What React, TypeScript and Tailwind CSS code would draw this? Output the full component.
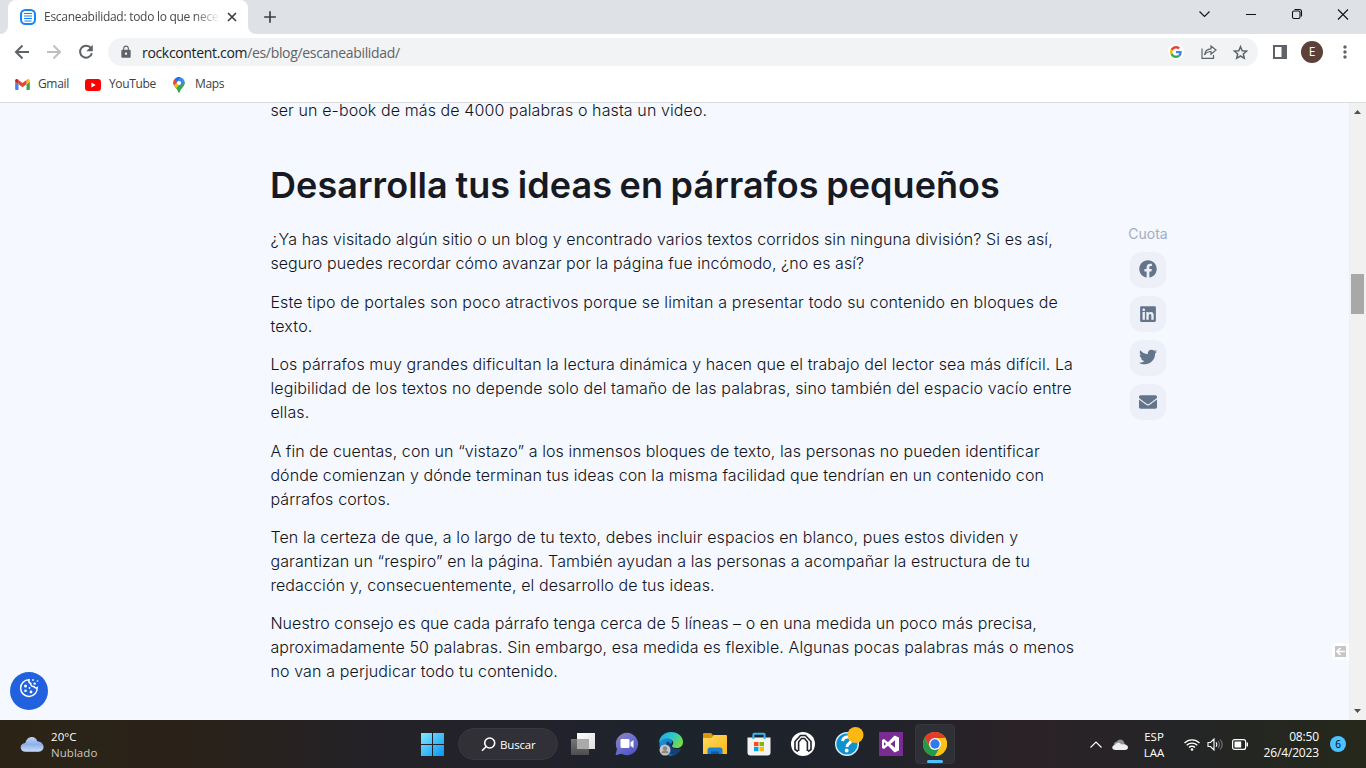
import type { ReactNode } from "react";
import { FaFacebook, FaLinkedin, FaTwitter, FaEnvelope } from "react-icons/fa";
import { MdLock, MdMoreVert, MdAdd } from "react-icons/md";

const ui = "font-['Open_Sans','Noto_Sans',sans-serif] whitespace-nowrap";

function GoogleG() {
  return (
    <svg width="12" height="12" viewBox="0 0 48 48">
      <path fill="#EA4335" d="M24 9.5c3.54 0 6.71 1.22 9.21 3.6l6.85-6.85C35.9 2.38 30.47 0 24 0 14.62 0 6.51 5.38 2.56 13.22l7.98 6.19C12.43 13.72 17.74 9.5 24 9.5z" />
      <path fill="#4285F4" d="M46.98 24.55c0-1.57-.15-3.09-.38-4.55H24v9.02h12.94c-.58 2.96-2.26 5.48-4.78 7.18l7.73 6c4.51-4.18 7.09-10.36 7.09-17.65z" />
      <path fill="#FBBC05" d="M10.53 28.59c-.48-1.45-.76-2.99-.76-4.59s.27-3.14.76-4.59l-7.98-6.19C.92 16.46 0 20.12 0 24s.92 7.54 2.56 10.78l7.97-6.19z" />
      <path fill="#34A853" d="M24 48c6.48 0 11.93-2.13 15.89-5.81l-7.73-6c-2.15 1.45-4.92 2.3-8.16 2.3-6.26 0-11.57-4.22-13.47-9.91l-7.98 6.19C6.51 42.62 14.62 48 24 48z" />
    </svg>
  );
}

function GmailIcon() {
  return (
    <svg width="15" height="11" viewBox="52 42 88 66">
      <path fill="#4285f4" d="M58 108h14V74L52 59v43c0 3.32 2.69 6 6 6" />
      <path fill="#34a853" d="M120 108h14c3.32 0 6-2.69 6-6V59l-20 15" />
      <path fill="#fbbc04" d="M120 48v26l20-15v-8c0-7.42-8.47-11.65-14.4-7.2" />
      <path fill="#ea4335" d="M72 74V48l24 18 24-18v26L96 92" />
      <path fill="#c5221f" d="M52 51v8l20 15V48l-5.6-4.2c-5.94-4.45-14.4-.22-14.4 7.2" />
    </svg>
  );
}

function MapsIcon() {
  return (
    <svg width="12" height="16" viewBox="0 0 12 16">
      <path fill="#34a853" d="M.8 8.4C1.900 10.500 4.800 12 5.200 15.100c.2 1.100 1.400 1.100 1.600 0 .5-3.100 3.400-4.700 4.500-7.200.6-1.300.7-2.500.4-3.700z" />
      <path fill="#fbbc04" d="M.9 8.600c.6 1.100 1.400 2 2.200 2.900L8 5.700 4.200 4.600z" />
      <path fill="#ea4335" d="M1.500 2.100A5.900 5.900 0 0 0 .9 8.600L4.700 4.700z" />
      <path fill="#1a73e8" d="M1.500 2.100A6 6 0 0 1 7.700.2L4.500 5z" />
      <path fill="#4285f4" d="M7.700.2a6 6 0 0 1 3.900 4L7.500 8.200 5 4z" />
      <circle cx="6" cy="6" r="2.100" fill="#fff" />
    </svg>
  );
}

function Bookmark({ icon, label, className }: { icon: ReactNode; label: string; className: string }) {
  return (
    <div className={`flex items-center ${className}`}>
      {icon}
      <span className="-mt-px">{label}</span>
    </div>
  );
}

function TabStrip() {
  return (
    <div className="flex h-[34px] items-stretch bg-[#dee1e6] pl-2">
      <div className="relative flex w-[240px] items-center rounded-t-lg bg-white pl-3">
        <svg className="absolute -left-2 bottom-0" width="8" height="8"><path fill="#fff" d="M8 0v8H0a8 8 0 0 0 8-8z" /></svg>
        <svg className="absolute -right-2 bottom-0" width="8" height="8"><path fill="#fff" d="M0 0v8h8a8 8 0 0 1-8-8z" /></svg>
        <svg width="16" height="16" viewBox="0 0 16 16" fill="none" stroke="#1583fb">
          <rect x="1" y="1" width="14" height="14" rx="4.500" strokeWidth="2" />
          <path strokeWidth="1.200" d="M4 4.500h8M4 7h8M4 9.500h8M4.500 12h7" />
        </svg>
        <div className={`${ui} ml-2 w-[175px] text-[12px] tracking-[-0.28px] text-[#45484b] [mask-image:linear-gradient(to_right,#000_150px,transparent_176px)]`}>
          Escaneabilidad: todo lo que nece
        </div>
        <svg className="ml-[8px]" width="10" height="10" fill="none" stroke="#3c4043" strokeWidth="1.700"><path d="M1 1l8 8M9 1L1 9" /></svg>
      </div>
      <MdAdd className="mt-[7px] ml-[12px] text-[#3c4043]" size={20} />
      <svg className="mt-[8px] mr-[7px] ml-auto" width="160" height="14" viewBox="0 0 160 14" fill="none" stroke="#111" strokeWidth="1.100">
        <path d="M.5 3.500l5 5 5-5M47 6.500h10" />
        <rect x="93.500" y="3" width="7.500" height="7.500" rx="1.500" />
        <path d="M95.500 1.500h5a2 2 0 0 1 2 2v5M139 1.500l10 10M149 1.500l-10 10" />
      </svg>
    </div>
  );
}

function Toolbar() {
  return (
    <div className="flex h-9 items-center pr-[11px] pl-3">
      <svg width="20" height="20" fill="none" stroke="#5f6368" strokeWidth="2"><path d="M17 10H4.500M10.500 3.500L4 10l6.500 6.500" /></svg>
      <svg className="ml-3" width="20" height="20" fill="none" stroke="#bdbfc1" strokeWidth="2"><path d="M3 10h12.500M9.500 3.500L16 10l-6.500 6.500" /></svg>
      <svg className="ml-3" width="20" height="20"><path fill="none" stroke="#5f6368" strokeWidth="2" d="M15 6.200A6 6 0 1 0 15.900 11.200" /><path fill="#5f6368" d="M16.800 2.700v6.500h-6.500z" /></svg>
      <div className="ml-3 flex h-7 flex-1 items-center rounded-full bg-[#f1f3f4] pr-[9px] pl-[11px]">
        <MdLock size={14} className="text-[#5f6368]" />
        <div className={`${ui} ml-[9px] text-[14px] tracking-[-0.33px] text-[#5f6368]`}>
          <span className="text-[#202124]">rockcontent.com</span>/es/blog/escaneabilidad/
        </div>
        <div className="ml-auto flex size-4 items-center justify-center rounded-full bg-white"><GoogleG /></div>
        <svg className="ml-[17px]" width="16" height="16" viewBox="0 0 16 16" fill="none" stroke="#5f6368" strokeWidth="1.200">
          <path d="M1 4.500v9.800h11.500V11M3.500 11C4 7 6 5 10 4.800V2l5 4-5 4.200V7.500C7 7.500 5.200 8.500 3.500 11z" />
        </svg>
        <svg className="ml-[15px]" width="17" height="17" viewBox="0 0 17 17" fill="none" stroke="#5f6368" strokeWidth="1.500">
          <path d="M8.500 2.700l1.700 4 4.400.4-3.300 2.900 1 4.300-3.800-2.300-3.800 2.300 1-4.300-3.300-2.900 4.400-.4z" />
        </svg>
      </div>
      <svg className="ml-[15px]" width="14" height="14" viewBox="0 0 14 14">
        <path fill="#5f6368" fillRule="evenodd" d="M0 0h14v14H0zM2 2v10h6.500V2z" />
      </svg>
      <div className={`${ui} ml-[14px] flex size-[22px] items-center justify-center rounded-full bg-[#5d4037] text-[12px] text-white`}>E</div>
      <MdMoreVert className="ml-[12px] text-[#5f6368]" size={20} />
    </div>
  );
}

function Bookmarks() {
  return (
    <div className={`${ui} flex h-[33px] items-center border-b border-[#d9dce1] pb-[3px] pl-[15px] text-[12px] tracking-[-0.35px] text-[#3c4043]`}>
      <Bookmark className="w-[70px] gap-2" icon={<GmailIcon />} label="Gmail" />
      <Bookmark
        className="w-[88px] gap-2"
        icon={
          <svg width="16" height="12" viewBox="0 0 16 12">
            <rect width="16" height="12" rx="3" fill="#f00" />
            <path fill="#fff" d="M6.400 3.500v5l4.300-2.500z" />
          </svg>
        }
        label="YouTube"
      />
      <Bookmark className="gap-[10px]" icon={<MapsIcon />} label="Maps" />
    </div>
  );
}

const paragraphs = [
  [
    { text: "¿Ya has visitado algún sitio o un blog y encontrado varios textos corridos sin ninguna división? Si es así,", track: "tracking-[0.11px]" },
    { text: "seguro puedes recordar cómo avanzar por la página fue incómodo, ¿no es así?", track: "tracking-[0.075px]" },
  ],
  [
    { text: "Este tipo de portales son poco atractivos porque se limitan a presentar todo su contenido en bloques de", track: "tracking-[0.155px]" },
    { text: "texto.", track: "tracking-[0.2px]" },
  ],
  [
    { text: "Los párrafos muy grandes dificultan la lectura dinámica y hacen que el trabajo del lector sea más difícil. La", track: "tracking-[0.1px]" },
    { text: "legibilidad de los textos no depende solo del tamaño de las palabras, sino también del espacio vacío entre", track: "tracking-[0.125px]" },
    { text: "ellas.", track: "tracking-[0.1px]" },
  ],
  [
    { text: "A fin de cuentas, con un “vistazo” a los inmensos bloques de texto, las personas no pueden identificar", track: "tracking-[0.09px]" },
    { text: "dónde comienzan y dónde terminan tus ideas con la misma facilidad que tendrían en un contenido con", track: "tracking-[0.09px]" },
    { text: "párrafos cortos.", track: "tracking-[0.15px]" },
  ],
  [
    { text: "Ten la certeza de que, a lo largo de tu texto, debes incluir espacios en blanco, pues estos dividen y", track: "tracking-[0.115px]" },
    { text: "garantizan un “respiro” en la página. También ayudan a las personas a acompañar la estructura de tu", track: "tracking-[0.11px]" },
    { text: "redacción y, consecuentemente, el desarrollo de tus ideas.", track: "tracking-[0.11px]" },
  ],
  [
    { text: "Nuestro consejo es que cada párrafo tenga cerca de 5 líneas – o en una medida un poco más precisa,", track: "tracking-[0.08px]" },
    { text: "aproximadamente 50 palabras. Sin embargo, esa medida es flexible. Algunas pocas palabras más o menos", track: "tracking-[0.1px]" },
    { text: "no van a perjudicar todo tu contenido.", track: "tracking-[0.13px]" },
  ],
];

const shares = [
  { Icon: FaFacebook, nudge: "pb-[2px]" },
  { Icon: FaLinkedin, nudge: "pb-0" },
  { Icon: FaTwitter, nudge: "pb-[2px]" },
  { Icon: FaEnvelope, nudge: "pb-0" },
];

function Article() {
  return (
    <main className="relative flex h-[617px] bg-[#f5f8ff] font-['Inter',sans-serif]">
      <article className="ml-[270px] w-[858px] text-[16px] leading-6 font-light whitespace-nowrap text-[#10131a]">
        <p className="pl-[0.4px] leading-[14px] tracking-[0.1px]">ser un e-book de más de 4000 palabras o hasta un video.</p>
        <h2 className="mt-[44px] text-[36px] leading-[48px] font-semibold tracking-[0.05px] text-[#171a22] [word-spacing:-1.500px]">Desarrolla tus ideas en párrafos pequeños</h2>
        <div className="mt-[18.490px] flex flex-col gap-[14.350px] pl-[0.4px]">
          {paragraphs.map((lines) => (
            <p key={lines[0].text}>
              {lines.map((line) => (
                <span key={line.text} className={`block ${line.track}`}>{line.text}</span>
              ))}
            </p>
          ))}
        </div>
      </article>
      <aside className="flex w-10 flex-col items-center pt-[121px]">
        <span className="mb-2 text-[14px] leading-5 text-[#a3adc2]">Cuota</span>
        <div className="flex flex-col gap-2">
          {shares.map(({ Icon, nudge }, i) => (
            <div key={i} className={`flex size-9 items-center justify-center rounded-xl bg-[#edf0f8] text-[#64748b] ${nudge}`}>
              <Icon size={18} />
            </div>
          ))}
        </div>
      </aside>
      <div className="ml-auto flex w-[17px] flex-col items-center justify-between bg-[#f1f1f1] py-[7px]">
        <svg width="7" height="4"><path fill="#505050" d="M0 4l3.500-4L7 4z" /></svg>
        <svg width="7" height="4"><path fill="#505050" d="M0 0l3.500 4L7 0z" /></svg>
      </div>
      <div className="absolute top-[171px] right-[2px] h-10 w-[13px] bg-[#a8a8a8]" />
      <div className="absolute top-[540px] right-[17px] flex h-[17px] w-[17px] items-center rounded-l bg-white pl-[3px]">
        <svg width="11" height="11"><path fill="#c6c6c6" d="M0 0h11v11H0z" /><path stroke="#fff" strokeWidth="1.700" fill="none" d="M10 5.500H2M5.500 2L2 5.500 5.500 9" /></svg>
      </div>
      <div className="absolute top-[569px] left-[10px] flex size-[38px] items-center justify-center rounded-full bg-[#2161de]">
        <svg className="-mt-[6px]" width="20" height="20" viewBox="0 0 20 20">
          <path fill="none" stroke="#fff" strokeWidth="1.500" d="M10 1.800A8.300 8.300 0 1 0 18.200 9.600c-1.200.7-2.700.2-3.300-1-2 .2-3.500-1.300-3.100-3.100C10.300 5 9.500 3.500 10 1.800z" />
          <g fill="#fff"><circle cx="6.500" cy="8" r="1.500" /><circle cx="6.500" cy="12.700" r="1.300" /><circle cx="10.500" cy="10" r=".9" /><circle cx="12" cy="14" r="1.400" /><circle cx="14" cy="2" r=".9" /><circle cx="15.700" cy="5.600" r="1.200" /><circle cx="18.500" cy="3" r=".8" /></g>
        </svg>
      </div>
    </main>
  );
}

function WindowsLogo() {
  return (
    <svg width="24" height="24" viewBox="0 0 24 24">
      <defs><linearGradient id="win" x1="0" y1="0" x2="1" y2="1"><stop stopColor="#7eeaff" /><stop offset="1" stopColor="#0a93f5" /></linearGradient></defs>
      <path fill="url(#win)" d="M1 1h11v11H1zM13 1h11v11H13zM1 13h11v11H1zM13 13h11v11H13z" />
    </svg>
  );
}

function TaskView() {
  return (
    <svg width="24" height="22" viewBox="0 0 24 22">
      <defs>
        <linearGradient id="tvb" x1="0" y1="0" x2="0" y2="1"><stop stopColor="#777" /><stop offset="1" stopColor="#4d4d4f" /></linearGradient>
        <linearGradient id="tvf" x1="0" y1="0" x2="1" y2="1"><stop stopColor="#fff" /><stop offset="1" stopColor="#dedede" /></linearGradient>
      </defs>
      <path fill="url(#tvf)" d="M6 0h18v16H6z" />
      <path fill="url(#tvb)" d="M0 6h18v16H0z" />
      <path fill="#aaa" d="M6 6h12v10H6z" />
    </svg>
  );
}

function ChatIcon() {
  return (
    <svg width="24" height="24" viewBox="0 0 24 24">
      <defs><linearGradient id="chat" x1="0" y1="0" x2=".7" y2="1"><stop stopColor="#9c7a9e" /><stop offset=".4" stopColor="#7277cf" /><stop offset="1" stopColor="#5155c5" /></linearGradient></defs>
      <path fill="url(#chat)" d="M12 .8A11.200 11.200 0 1 1 6.500 21.800L1.500 23c-.7.100-1-.2-.8-.9L2 17A11.200 11.200 0 0 1 12 .8z" />
      <rect x="5.500" y="7" width="9" height="9" rx="1.200" fill="#fff" />
      <path fill="#fff" d="M15.500 10.300L18.500 8v8l-3-2.300z" />
    </svg>
  );
}

function EdgeIcon() {
  return (
    <svg width="26" height="26" viewBox="0 0 26 26">
      <defs>
        <linearGradient id="e1" x1="0" y1="0" x2="1" y2=".5"><stop stopColor="#2aa4e3" /><stop offset=".55" stopColor="#2bc7cf" /><stop offset="1" stopColor="#72dc49" /></linearGradient>
        <linearGradient id="e2" x1="0" y1="0" x2="1" y2="1"><stop stopColor="#1b9de2" /><stop offset="1" stopColor="#0c4f9c" /></linearGradient>
      </defs>
      <path fill="url(#e2)" d="M2 10c2-4 8-5 11-2 2 2 1 4 0 5-1 4 4 7 10 5-3 5-8 8-13 6.500C3.500 23 .3 17 2 10z" />
      <path fill="#113f7e" d="M9 10c-2 6 0 12 6 14 3-.5 6-2.500 8-6-6 2-11-1-10-5z" />
      <path fill="url(#e1)" d="M1 12C1.500 5 6.500 1 13 1c7 0 12 4.500 12 10 0 4-3 6-6.500 6-3 0-4.500-1-4.500-2s1.500-1.500 1.200-3.500C14.500 6.500 5 5 1 12z" />
      <circle cx="7" cy="19" r="5.500" fill="#c7c5c4" />
      <circle cx="7" cy="17.500" r="2.200" fill="#8a8887" /><path fill="#8a8887" d="M3.400 22.300a3.600 2.800 0 0 1 7.200 0z" />
    </svg>
  );
}

function FolderIcon() {
  return (
    <svg width="24" height="22" viewBox="0 0 24 22">
      <defs><linearGradient id="fold" x1="0" y1="0" x2="1" y2="1"><stop stopColor="#ffd95e" /><stop offset="1" stopColor="#fbb91a" /></linearGradient></defs>
      <path fill="#d9950b" d="M0 1Q0 0 1 0h7l2 2-2 4H0z" />
      <path fill="url(#fold)" d="M0 5h8l2.500-3H23q1 0 1 1v18H0z" />
      <path fill="#1980d2" d="M4.500 21v-4q0-2.500 2.500-2.500h10q2.500 0 2.500 2.500v4z" /><path fill="#0d5ba7" d="M8 18.500h8v2.500H8z" />
    </svg>
  );
}

function StoreIcon() {
  return (
    <svg width="24" height="24" viewBox="0 0 24 24">
      <path fill="#f3f3f3" d="M.500 5.500h23V20.500q0 3-3 3h-17q-3 0-3-3z" />
      <path fill="none" stroke="#35b9f0" strokeWidth="2" d="M6.400 7V2.500q0-.8.800-.8h9.600q.8 0 .8.800V7" />
      <path fill="#f25022" d="M7 10h4.500v4.200H7z" /><path fill="#7fba00" d="M12.500 10H17v4.200h-4.500z" />
      <path fill="#00a4ef" d="M7 15h4.500v4.200H7z" /><path fill="#ffb900" d="M12.500 15H17v4.200h-4.500z" />
    </svg>
  );
}

function PavilionIcon() {
  return (
    <svg width="24" height="24" viewBox="0 0 24 24">
      <circle cx="12" cy="12" r="12" fill="#fff" />
      <path fill="none" stroke="#22252b" strokeWidth="1.600" d="M7 19.500L4 17.500V9.500L9.500 3.500h5L20 9.500v8l-3 2" />
      <path fill="none" stroke="#22252b" strokeWidth="1.600" d="M7.600 19V10L10.500 6.500h3L16.400 10v9" />
    </svg>
  );
}

function HelpIcon() {
  return (
    <svg width="30" height="30" viewBox="0 0 30 30">
      <circle cx="13" cy="17" r="11.300" fill="#0c93cf" stroke="#d8eef8" strokeWidth="1.400" />
      <path fill="none" stroke="#fff" strokeWidth="3" d="M8.500 14c.5-3 3-4.500 5.500-4 3.500.7 4 4.200 1.500 6-1.800 1.200-2.500 1.700-2.500 4" />
      <circle cx="12.700" cy="23.500" r="1.900" fill="#fff" />
      <circle cx="21.500" cy="8" r="8" fill="#fdb913" />
    </svg>
  );
}

function VisualStudioIcon() {
  return (
    <svg width="24" height="24" viewBox="0 0 24 24">
      <path fill="#7a2b94" d="M0 0h24v24H0z" />
      <path fill="#fff" fillRule="evenodd" d="M3 8l2-1 4 3.200L15.500 3.500 20 5.500v13l-4.500 2L9 13.800 5 17l-2-1zM5 10v4l2-2zM11.500 12l4.500 3.800V8.200z" />
    </svg>
  );
}

function ChromeIcon() {
  return (
    <svg width="24" height="24" viewBox="0 0 24 24">
      <circle cx="12" cy="12" r="12" fill="#fbc116" />
      <path fill="#e33b2e" d="M1.600 6A12 12 0 0 1 22.400 6H12L6.800 15z" />
      <path fill="#229a48" d="M1.600 6A12 12 0 0 0 12 24l5.200-9-10.400 0z" />
      <path fill="#fbc116" d="M22.400 6A12 12 0 0 1 12 24l5.200-9A6 6 0 0 0 12 6z" />
      <circle cx="12" cy="12" r="6" fill="#fff" /><circle cx="12" cy="12" r="4.700" fill="#3079ee" />
    </svg>
  );
}

function Slot({ children }: { children: ReactNode }) {
  return <div className="flex size-11 shrink-0 items-center justify-center">{children}</div>;
}

function Tray() {
  return (
    <div className="ml-auto flex items-center text-[12px] leading-4 text-white">
      <svg width="12" height="7" fill="none" stroke="#fff" strokeWidth="1.200"><path d="M.5 6.500L6 1l5.500 5.500" /></svg>
      <svg className="ml-[10px]" width="16" height="11" viewBox="0 0 16 11">
        <path fill="#929292" d="M2 7C1 3.500 4 2.500 4.800 2.500 6.500-.5 11-.2 12 3l1 3z" />
        <path fill="#eee" d="M3.500 11C-.5 11-1 6.500 3 6c1.500-2.500 4.500-3 6.500-.5C13 4.500 16 6 16 8.300 16 10 14.700 11 13 11z" />
      </svg>
      <div className="ml-[13px] w-[26px] pt-px text-center text-[11.500px] tracking-[0px]"><div>ESP</div><div>LAA</div></div>
      <svg className="ml-[16px]" width="18" height="13" viewBox="0 0 18 13" fill="none" stroke="#fff" strokeWidth="1.300">
        <path d="M1.500 5a10.500 10.500 0 0 1 15 0M3.700 7.300a7.400 7.400 0 0 1 10.600 0M6 9.500a4.200 4.200 0 0 1 6 0" /><circle cx="9" cy="11.500" r="1.300" fill="#fff" stroke="none" />
      </svg>
      <svg className="ml-[6px]" width="17" height="13" viewBox="0 0 17 13" fill="none" stroke="#fff" strokeWidth="1.100">
        <path d="M1 4.500h2.500L7 1v11L3.500 8.500H1zM9 4.300q1.600 2.200 0 4.400" /><path stroke="#77787b" d="M11 3q3 3.500 0 7M13 1.500q4.500 5 0 10" />
      </svg>
      <svg className="ml-[8px]" width="17" height="11" viewBox="0 0 17 11">
        <rect x=".6" y=".6" width="13" height="9.800" rx="2" fill="none" stroke="#fff" strokeWidth="1.200" /><path fill="#fff" d="M2.500 2.500h6.700v6H2.500zM14.500 3.500H16v4h-1.500z" />
      </svg>
      <div className="ml-[9px] w-[61px] pt-px text-right tracking-[-0.15px]"><div>08:50</div><div>26/4/2023</div></div>
      <div className="mr-5 ml-[11px] flex size-4 items-center justify-center rounded-full bg-[#4cc2ff] text-[10px] text-black">6</div>
    </div>
  );
}

function Taskbar() {
  return (
    <div className={`${ui} relative flex h-12 items-center bg-[linear-gradient(90deg,#2b2416_0%,#2a2219_14%,#242229_28%,#22222b_40%,#1c242b_50%,#20232b_63%,#2b2227_75%,#242527_86%,#25281a_100%)]`}>
      <div className="flex w-[410px] shrink-0 items-center pt-px pl-[20px] text-[11.500px] leading-4 text-white">
        <svg width="24" height="17" viewBox="0 0 25 17">
          <defs><linearGradient id="cl" x1="0" y1="0" x2="0" y2="1"><stop stopColor="#bed3f5" /><stop offset=".5" stopColor="#8eb0e8" /><stop offset="1" stopColor="#c9ddfb" /></linearGradient></defs>
          <path fill="url(#cl)" d="M6 16C-1 16-1 7.500 5.500 7 7-.5 16-1.500 18 5c8 .5 9 10.500 1.500 11z" />
        </svg>
        <div className="ml-[7px] tracking-[0.05px]"><div>20°C</div><div className="text-[#c9c7c3]">Nublado</div></div>
      </div>
      <Slot><WindowsLogo /></Slot>
      <div className="mx-1 flex h-8 w-[100px] shrink-0 items-center rounded-full border border-[#38383e] bg-[#303036] pl-[22px] text-[11.500px] tracking-[-0.15px] text-white">
        <svg width="15" height="15" fill="none" stroke="#fff" strokeWidth="1.600"><circle cx="8.700" cy="6" r="5" /><path d="M5 9.700L1 13.700" /></svg>
        <span className="ml-[4px] pt-px">Buscar</span>
      </div>
      <div className="-ml-px flex shrink-0">
        <Slot><TaskView /></Slot>
        <Slot><ChatIcon /></Slot>
        <Slot><EdgeIcon /></Slot>
        <Slot><FolderIcon /></Slot>
        <Slot><StoreIcon /></Slot>
        <Slot><PavilionIcon /></Slot>
        <Slot><div className="mb-1 ml-1"><HelpIcon /></div></Slot>
        <Slot><VisualStudioIcon /></Slot>
      </div>
      <div className="relative ml-[2px] flex size-10 shrink-0 items-center justify-center rounded border border-[#36363c] bg-[#2f3036]">
        <ChromeIcon />
        <div className="absolute bottom-0 h-[3px] w-4 rounded-full bg-[#4cc2ff]" />
      </div>
      <Tray />
    </div>
  );
}

export default function App() {
  return (
    <div className="flex h-[768px] w-[1366px] flex-col overflow-hidden bg-white">
      <TabStrip />
      <Toolbar />
      <Bookmarks />
      <Article />
      <Taskbar />
    </div>
  );
}
